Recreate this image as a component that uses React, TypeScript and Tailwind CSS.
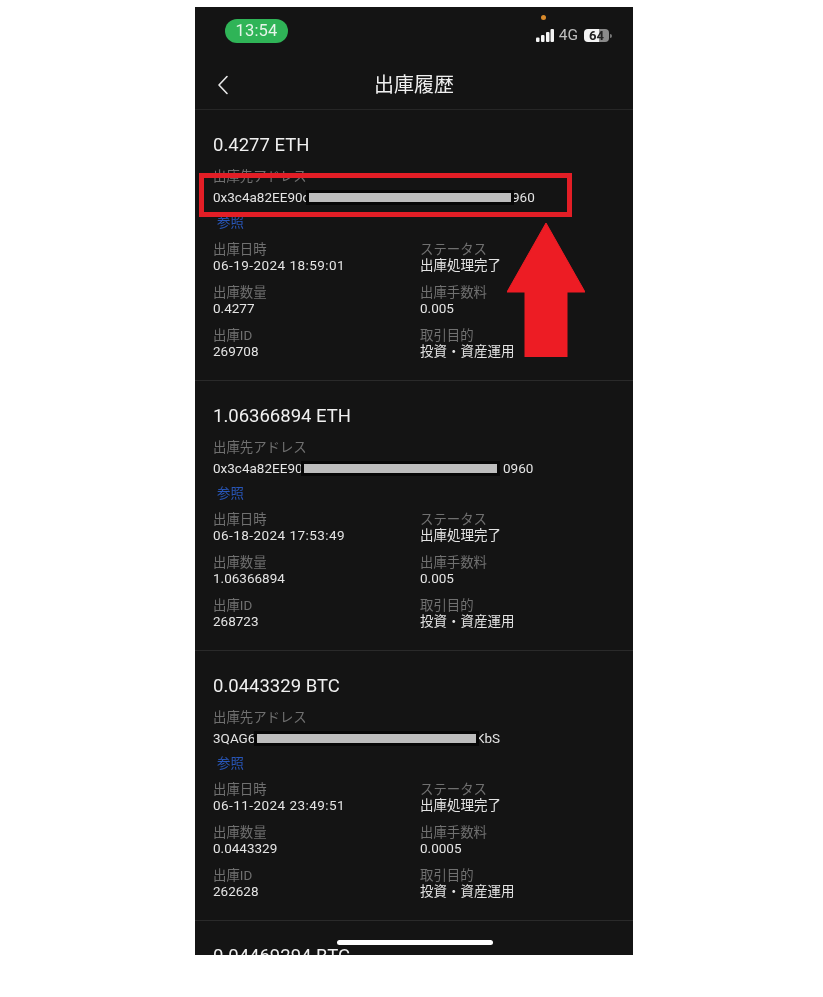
const font = { fontFamily: '"Roboto", "Noto Sans CJK JP", sans-serif' };

type Entry = {
  amount: string;
  start: string;
  startW: string;
  barW: string;
  endGap: string;
  end: string;
  date: string;
  qty: string;
  fee: string;
  id: string;
};

const entries: Entry[] = [
  { amount: "0.4277 ETH", start: "0x3c4a82EE90c", startW: "w-[93px]", barW: "w-[208px]", endGap: "-ml-[2px]", end: "960", date: "06-19-2024 18:59:01", qty: "0.4277", fee: "0.005", id: "269708" },
  { amount: "1.06366894 ETH", start: "0x3c4a82EE90c", startW: "w-[88px]", barW: "w-[199px]", endGap: "ml-[3px]", end: "0960", date: "06-18-2024 17:53:49", qty: "1.06366894", fee: "0.005", id: "268723" },
  { amount: "0.0443329 BTC", start: "3QAG6", startW: "w-[41px]", barW: "w-[225px]", endGap: "-ml-[3px]", end: "KbS", date: "06-11-2024 23:49:51", qty: "0.0443329", fee: "0.0005", id: "262628" },
];

function Field({ label, value, valueClass }: { label: string; value: string; valueClass?: string }) {
  return (
    <div className="mt-3">
      <div className="h-4 whitespace-nowrap text-[13.4px] leading-4 text-[#707070]">{label}</div>
      <div className={`-mt-px h-4 whitespace-nowrap text-[13.5px] leading-4 text-[#e4e4e4] ${valueClass ?? ""}`}>{value}</div>
    </div>
  );
}

function Card({ e }: { e: Entry }) {
  return (
    <section className="group h-[270px] border-b border-[#2a2a2a] pl-[18px] pt-6 first:h-[271px]">
      <h2 className="h-[22px] text-[18.5px] leading-[22px] text-[#f0f0f0]">{e.amount}</h2>
      <div className="mt-[13px] h-4 text-[13.4px] leading-4 text-[#707070]">出庫先アドレス</div>
      <div className="mt-1 flex h-4 items-center text-[13.5px] leading-4 text-[#e4e4e4]">
        <span className={`${e.startW} whitespace-nowrap`}>{e.start}</span>
        <span className={`${e.barW} relative z-10 h-[15px] border-[3px] border-[#070707] bg-[#bdbdbd]`} />
        <span className={`${e.endGap} whitespace-nowrap`}>{e.end}</span>
      </div>
      <div className="mt-2.5 h-4 pl-1 text-[13.4px] leading-4 text-[#2856b8]">参照</div>
      <div className="-mt-[2px] grid grid-cols-[207px_1fr] group-first:-mt-px">
        <Field label="出庫日時" value={e.date} valueClass="tracking-[0.45px]" />
        <Field label="ステータス" value="出庫処理完了" valueClass="text-[13.4px]" />
        <Field label="出庫数量" value={e.qty} />
        <Field label="出庫手数料" value={e.fee} />
        <Field label="出庫ID" value={e.id} />
        <Field label="取引目的" value="投資・資産運用" valueClass="text-[13.4px]" />
      </div>
    </section>
  );
}

export default function App() {
  return (
    <div className="min-h-[997px] bg-white pt-[7px]" style={font}>
      <div className="relative ml-[195px] h-[948px] w-[438px] overflow-hidden bg-[#141414] blur-[0.35px]">
        <div className="flex h-[53px] justify-between pl-[30px] pr-[21px] pt-3">
          <div className="flex h-6 w-[63px] items-center justify-center rounded-full bg-[#2fb457] text-[16.5px] tracking-[0.2px] text-[#e6f5ea]">13:54</div>
          <div className="mt-[10px] flex h-[13px] items-center gap-[5px]">
            <svg width="18" height="13" viewBox="0 0 18 13" fill="#f5f5f5">
              <rect x="0" y="8.5" width="3.5" height="4.5" rx="1" />
              <rect x="5" y="6" width="3.5" height="7" rx="1" />
              <rect x="10" y="3" width="3.5" height="10" rx="1" />
              <rect x="14.5" y="0" width="3.5" height="13" rx="1" />
            </svg>
            <span className="text-[15.5px] leading-[13px] text-[#bdbdbd]">4G</span>
            <span className="ml-[1px] flex h-[13px] w-[25px] items-center justify-center rounded-[4px] bg-[linear-gradient(90deg,#f4f4f4_0%,#f4f4f4_62%,#8a8a8a_62%,#8a8a8a_100%)] text-[13px] font-bold leading-[13px] text-[#222]">64</span>
            <span className="-ml-1 h-1 w-[2px] rounded-r-sm bg-[#777]" />
          </div>
        </div>
        <span className="absolute left-[346px] top-[8px] size-[5px] rounded-full bg-[#d98a2b]" />

        <header className="grid h-[50px] grid-cols-[1fr_auto_1fr] items-center border-b border-[#262626]">
          <svg className="ml-[22px]" width="12" height="20" viewBox="0 0 12 20" fill="none" stroke="#e8e8e8" strokeWidth="1.6" strokeLinecap="round" strokeLinejoin="round">
            <path d="M10 1.5 2 10l8 8.5" />
          </svg>
          <h1 className="text-[20px] leading-6 text-[#f0f0f0]">出庫履歴</h1>
          <span />
        </header>

        <div>
          {entries.map((e) => (
            <Card key={e.id} e={e} />
          ))}
        </div>
        <section className="pl-[18px] pt-6">
          <h2 className="h-[22px] text-[18.5px] leading-[22px] text-[#f0f0f0]">0.04469294 BTC</h2>
        </section>

        <span className="absolute left-[142px] top-[933px] h-[5px] w-[156px] rounded-full bg-white" />

        <div className="absolute left-[4px] top-[166px] z-20 h-[44px] w-[373px] border-[5px] border-[#e31e26]" />
        <svg className="absolute left-[312px] top-[216px] z-20" width="78" height="134" viewBox="0 0 78 134">
          <path d="M39 0 78 69H60V134H18V69H0Z" fill="#ed1c24" stroke="#ed1c24" strokeLinejoin="round" />
        </svg>
      </div>
    </div>
  );
}
